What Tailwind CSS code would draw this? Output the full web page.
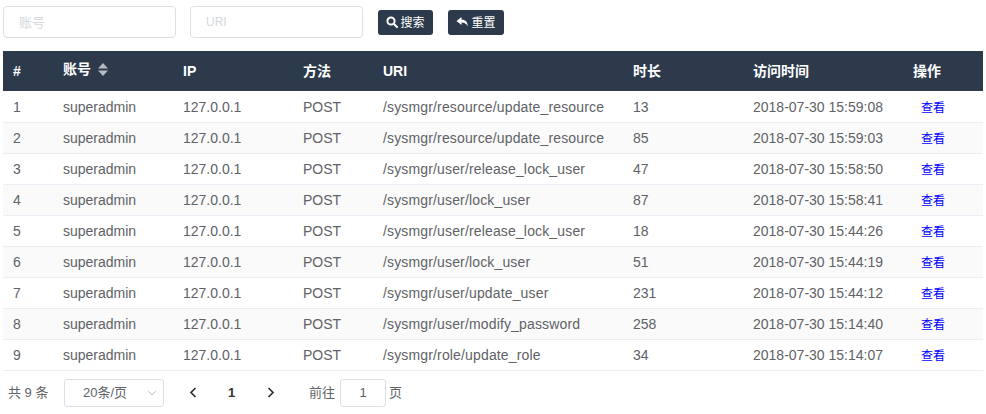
<!DOCTYPE html>
<html lang="en">
<head>
    <meta charset="UTF-8">
    <meta name="viewport" content="width=device-width, initial-scale=1.0">
    <title>访问日志</title>
    <script src="https://cdn.jsdelivr.net/npm/@tailwindcss/browser@4"></script>
</head>
<body class="bg-white font-['Liberation_Sans','Noto_Sans_CJK_SC',sans-serif] text-[14px] text-[#606266] overflow-hidden">

    <div class="pl-[3px] pr-[3px] pt-[6px]">
        <!-- Search bar -->
        <div class="flex items-center h-[32px]">
            <input type="text" placeholder="账号" class="w-[173px] h-[32px] px-[15px] border border-[#dcdfe6] rounded-[4px] text-[13px] placeholder:text-[#d5d8de] outline-none">
            <input type="text" placeholder="URI" class="w-[173px] h-[32px] px-[15px] ml-[14px] border border-[#dcdfe6] rounded-[4px] text-[12px] placeholder:text-[#d5d8de] outline-none">
            <button class="flex items-center justify-center ml-[15px] w-[55px] h-[25px] bg-[#2d3a4b] text-white text-[12px] rounded-[3px]">
                <svg class="w-[12px] h-[12px] mr-[2px]" viewBox="0 0 12 12" fill="none" stroke="white" stroke-width="2"><circle cx="5" cy="5" r="3.6"/><path d="M7.8 7.8 L11 11" stroke-linecap="round"/></svg>
                <span class="pt-[1px]">搜索</span>
            </button>
            <button class="flex items-center justify-center ml-[15px] w-[56px] h-[25px] bg-[#2d3a4b] text-white text-[12px] rounded-[3px]">
                <svg class="w-[13px] h-[12px] mr-[2px]" viewBox="0 0 13 12" fill="white"><path d="M5.5 1 L0.5 5 L5.5 9 V6.5 C8.5 6.5 10.5 7.5 11.5 10.5 C12.2 6.5 9.5 3.6 5.5 3.5 Z"/></svg>
                <span class="pt-[1px]">重置</span>
            </button>
        </div>

        <!-- Log table -->
        <table class="table-fixed w-[980px] mt-[13px] border-collapse">
            <colgroup>
                <col class="w-[50px]"><col class="w-[120px]"><col class="w-[120px]"><col class="w-[80px]"><col class="w-[250px]"><col class="w-[120px]"><col class="w-[160px]"><col class="w-[80px]">
            </colgroup>
            <thead>
                <tr class="h-[40px] bg-[#2d3a4b] text-white text-left font-bold">
                    <th class="pl-[10px]">#</th>
                    <th class="pl-[10px] pb-[4px]">
                        <span class="inline-flex items-center">账号
                            <svg class="w-[10px] h-[13px] ml-[7px]" viewBox="0 0 10 13" fill="#b4bbc4"><path d="M5 0 L10 5.5 H0 Z M0 7.5 H10 L5 13 Z"/></svg>
                        </span>
                    </th>
                    <th class="pl-[10px]">IP</th>
                    <th class="pl-[10px]">方法</th>
                    <th class="pl-[10px]">URI</th>
                    <th class="pl-[10px]">时长</th>
                    <th class="pl-[10px]">访问时间</th>
                    <th class="pl-[10px]">操作</th>
                </tr>
            </thead>
            <tbody>
                <tr class="h-[31px] border-b border-[#ebeef5]">
                    <td class="pl-[10px] pt-[2px]">1</td><td class="pl-[10px] pt-[2px]">superadmin</td><td class="pl-[10px] pt-[2px]">127.0.0.1</td><td class="pl-[10px] pt-[2px]">POST</td><td class="pl-[10px] pt-[2px] tracking-[0.15px]">/sysmgr/resource/update_resource</td><td class="pl-[10px] pt-[2px]">13</td><td class="pl-[10px] pt-[2px]">2018-07-30 15:59:08</td><td class="pl-[18px] pt-[2px]"><a href="#" class="text-[12px] text-[#0000ff]">查看</a></td>
                </tr>
                <tr class="h-[31px] border-b border-[#ebeef5] bg-[#fafafa]">
                    <td class="pl-[10px] pt-[2px]">2</td><td class="pl-[10px] pt-[2px]">superadmin</td><td class="pl-[10px] pt-[2px]">127.0.0.1</td><td class="pl-[10px] pt-[2px]">POST</td><td class="pl-[10px] pt-[2px] tracking-[0.15px]">/sysmgr/resource/update_resource</td><td class="pl-[10px] pt-[2px]">85</td><td class="pl-[10px] pt-[2px]">2018-07-30 15:59:03</td><td class="pl-[18px] pt-[2px]"><a href="#" class="text-[12px] text-[#0000ff]">查看</a></td>
                </tr>
                <tr class="h-[31px] border-b border-[#ebeef5]">
                    <td class="pl-[10px] pt-[2px]">3</td><td class="pl-[10px] pt-[2px]">superadmin</td><td class="pl-[10px] pt-[2px]">127.0.0.1</td><td class="pl-[10px] pt-[2px]">POST</td><td class="pl-[10px] pt-[2px] tracking-[0.15px]">/sysmgr/user/release_lock_user</td><td class="pl-[10px] pt-[2px]">47</td><td class="pl-[10px] pt-[2px]">2018-07-30 15:58:50</td><td class="pl-[18px] pt-[2px]"><a href="#" class="text-[12px] text-[#0000ff]">查看</a></td>
                </tr>
                <tr class="h-[31px] border-b border-[#ebeef5] bg-[#fafafa]">
                    <td class="pl-[10px] pt-[2px]">4</td><td class="pl-[10px] pt-[2px]">superadmin</td><td class="pl-[10px] pt-[2px]">127.0.0.1</td><td class="pl-[10px] pt-[2px]">POST</td><td class="pl-[10px] pt-[2px] tracking-[0.15px]">/sysmgr/user/lock_user</td><td class="pl-[10px] pt-[2px]">87</td><td class="pl-[10px] pt-[2px]">2018-07-30 15:58:41</td><td class="pl-[18px] pt-[2px]"><a href="#" class="text-[12px] text-[#0000ff]">查看</a></td>
                </tr>
                <tr class="h-[31px] border-b border-[#ebeef5]">
                    <td class="pl-[10px] pt-[2px]">5</td><td class="pl-[10px] pt-[2px]">superadmin</td><td class="pl-[10px] pt-[2px]">127.0.0.1</td><td class="pl-[10px] pt-[2px]">POST</td><td class="pl-[10px] pt-[2px] tracking-[0.15px]">/sysmgr/user/release_lock_user</td><td class="pl-[10px] pt-[2px]">18</td><td class="pl-[10px] pt-[2px]">2018-07-30 15:44:26</td><td class="pl-[18px] pt-[2px]"><a href="#" class="text-[12px] text-[#0000ff]">查看</a></td>
                </tr>
                <tr class="h-[31px] border-b border-[#ebeef5] bg-[#fafafa]">
                    <td class="pl-[10px] pt-[2px]">6</td><td class="pl-[10px] pt-[2px]">superadmin</td><td class="pl-[10px] pt-[2px]">127.0.0.1</td><td class="pl-[10px] pt-[2px]">POST</td><td class="pl-[10px] pt-[2px] tracking-[0.15px]">/sysmgr/user/lock_user</td><td class="pl-[10px] pt-[2px]">51</td><td class="pl-[10px] pt-[2px]">2018-07-30 15:44:19</td><td class="pl-[18px] pt-[2px]"><a href="#" class="text-[12px] text-[#0000ff]">查看</a></td>
                </tr>
                <tr class="h-[31px] border-b border-[#ebeef5]">
                    <td class="pl-[10px] pt-[2px]">7</td><td class="pl-[10px] pt-[2px]">superadmin</td><td class="pl-[10px] pt-[2px]">127.0.0.1</td><td class="pl-[10px] pt-[2px]">POST</td><td class="pl-[10px] pt-[2px] tracking-[0.15px]">/sysmgr/user/update_user</td><td class="pl-[10px] pt-[2px]">231</td><td class="pl-[10px] pt-[2px]">2018-07-30 15:44:12</td><td class="pl-[18px] pt-[2px]"><a href="#" class="text-[12px] text-[#0000ff]">查看</a></td>
                </tr>
                <tr class="h-[31px] border-b border-[#ebeef5] bg-[#fafafa]">
                    <td class="pl-[10px] pt-[2px]">8</td><td class="pl-[10px] pt-[2px]">superadmin</td><td class="pl-[10px] pt-[2px]">127.0.0.1</td><td class="pl-[10px] pt-[2px]">POST</td><td class="pl-[10px] pt-[2px] tracking-[0.15px]">/sysmgr/user/modify_password</td><td class="pl-[10px] pt-[2px]">258</td><td class="pl-[10px] pt-[2px]">2018-07-30 15:14:40</td><td class="pl-[18px] pt-[2px]"><a href="#" class="text-[12px] text-[#0000ff]">查看</a></td>
                </tr>
                <tr class="h-[31px] border-b border-[#ebeef5]">
                    <td class="pl-[10px] pt-[2px]">9</td><td class="pl-[10px] pt-[2px]">superadmin</td><td class="pl-[10px] pt-[2px]">127.0.0.1</td><td class="pl-[10px] pt-[2px]">POST</td><td class="pl-[10px] pt-[2px] tracking-[0.15px]">/sysmgr/role/update_role</td><td class="pl-[10px] pt-[2px]">34</td><td class="pl-[10px] pt-[2px]">2018-07-30 15:14:07</td><td class="pl-[18px] pt-[2px]"><a href="#" class="text-[12px] text-[#0000ff]">查看</a></td>
                </tr>
            </tbody>
        </table>

        <!-- Pagination -->
        <div class="flex items-center h-[28px] mt-[8px] pl-[5px] text-[13px]">
            <span class="w-[56px]">共 9 条</span>
            <div class="relative flex items-center w-[100px] h-[28px] pl-[18px] border border-[#dcdfe6] rounded-[3px]">
                20条/页
                <svg class="absolute right-[6px] top-[10px] w-[10px] h-[6px]" viewBox="0 0 10 6" fill="none" stroke="#c0c4cc"><path d="M1 1 L5 5 L9 1"/></svg>
            </div>
            <svg class="ml-[25px] w-[9px] h-[11px]" viewBox="0 0 9 11" fill="none" stroke="#303133" stroke-width="1.7"><path d="M6.5 1 L2 5.5 L6.5 10"/></svg>
            <span class="ml-[30px] w-[8px] font-bold text-[#303133]">1</span>
            <svg class="ml-[30px] w-[9px] h-[11px]" viewBox="0 0 9 11" fill="none" stroke="#303133" stroke-width="1.7"><path d="M2.5 1 L7 5.5 L2.5 10"/></svg>
            <span class="ml-[34px]">前往</span>
            <div class="flex items-center justify-center w-[46px] h-[28px] ml-[5px] border border-[#dcdfe6] rounded-[3px]">1</div>
            <span class="ml-[3px]">页</span>
        </div>
    </div>

</body>
</html>
